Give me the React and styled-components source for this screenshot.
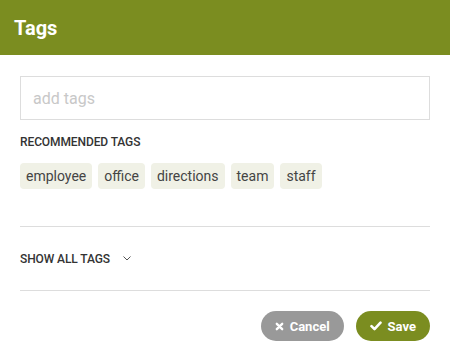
import React, { useState, useEffect, useRef } from "react";
import styled, { createGlobalStyle } from "styled-components";

const GlobalStyle = createGlobalStyle`
  html, body {
    margin: 0;
    padding: 0;
    background: #fff;
    font-family: Roboto, "Liberation Sans", Arial, sans-serif;
  }
`;

const Modal = styled.div`
  width: 450px;
  height: 362px;
  background: #fff;
  display: flex;
  flex-direction: column;
`;

const Header = styled.div`
  height: 55px;
  background: #7b8d20;
  display: flex;
  align-items: center;
  padding: 0 14px;
  box-sizing: border-box;
`;

const Title = styled.h2`
  margin: 0;
  color: #fff;
  font-size: 20px;
  font-weight: 700;
`;

const Body = styled.div`
  padding: 21px 20px 0;
  display: flex;
  flex-direction: column;
`;

const TagInput = styled.input`
  height: 44px;
  box-sizing: border-box;
  border: 1px solid #ddd;
  padding: 0 12px;
  font-family: inherit;
  font-size: 16px;
  color: #333;
  outline: none;
  caret-color: #333;
  &::placeholder {
    color: #c8c8c8;
  }
`;

const SectionLabel = styled.div`
  margin-top: 15px;
  line-height: 14px;
  font-size: 12px;
  font-weight: 500;
  color: #333;
  letter-spacing: -0.1px;
`;

const TagRow = styled.div`
  display: flex;
  gap: 6px;
  margin-top: 14px;
`;

const Tag = styled.button`
  height: 26px;
  padding: 0 6px;
  border: none;
  border-radius: 4px;
  background: #f0f1e6;
  color: #444;
  font-family: inherit;
  font-size: 14px;
  cursor: pointer;
`;

const Divider = styled.hr`
  margin: ${(p) => p.$top}px 0 0;
  border: none;
  border-top: 1px solid #ddd;
`;

const ShowAll = styled.button`
  display: flex;
  align-items: center;
  gap: 13px;
  padding: 0;
  margin: 0;
  height: 63px;
  border: none;
  background: none;
  font-family: inherit;
  font-size: 12px;
  font-weight: 500;
  color: #333;
  letter-spacing: -0.1px;
  cursor: pointer;
  text-align: left;
`;

const Footer = styled.div`
  display: flex;
  justify-content: flex-end;
  gap: 12px;
  margin-top: 20px;
`;

const ActionButton = styled.button`
  display: flex;
  align-items: center;
  gap: 6px;
  height: 30px;
  padding: 0 14px;
  border: none;
  border-radius: 15px;
  background: ${(p) => (p.$primary ? "#7b8d20" : "#999")};
  color: #fff;
  font-family: inherit;
  font-size: 13px;
  font-weight: 700;
  cursor: pointer;
`;

const tags = ["employee", "office", "directions", "team", "staff"];

function App() {
  const [value, setValue] = useState("");
  const inputRef = useRef(null);

  useEffect(() => {
    inputRef.current?.focus();
  }, []);

  return (
    <>
      <GlobalStyle />
      <Modal>
        <Header>
          <Title>Tags</Title>
        </Header>
        <Body>
          <TagInput
            ref={inputRef}
            placeholder="add tags"
            value={value}
            onChange={(e) => setValue(e.target.value)}
          />
          <SectionLabel>RECOMMENDED TAGS</SectionLabel>
          <TagRow>
            {tags.map((t) => (
              <Tag key={t}>{t}</Tag>
            ))}
          </TagRow>
          <Divider $top={37} />
          <ShowAll>
            SHOW ALL TAGS
            <svg width="8" height="5" viewBox="0 0 8 5" fill="none">
              <path d="M0.5 0.5l3.5 3.5 3.5-3.5" stroke="#555" strokeWidth="1" />
            </svg>
          </ShowAll>
          <Divider $top={0} />
          <Footer>
            <ActionButton>
              <svg width="9" height="9" viewBox="0 0 10 10">
                <path d="M2 2l6 6M8 2l-6 6" stroke="#fff" strokeWidth="2.6" strokeLinecap="round" />
              </svg>
              Cancel
            </ActionButton>
            <ActionButton $primary>
              <svg width="12" height="10" viewBox="0 0 12 10">
                <path d="M1.5 5.2l3 3 6-6.5" stroke="#fff" strokeWidth="2.6" fill="none" strokeLinecap="round" strokeLinejoin="round" />
              </svg>
              Save
            </ActionButton>
          </Footer>
        </Body>
      </Modal>
    </>
  );
}

export default App;
